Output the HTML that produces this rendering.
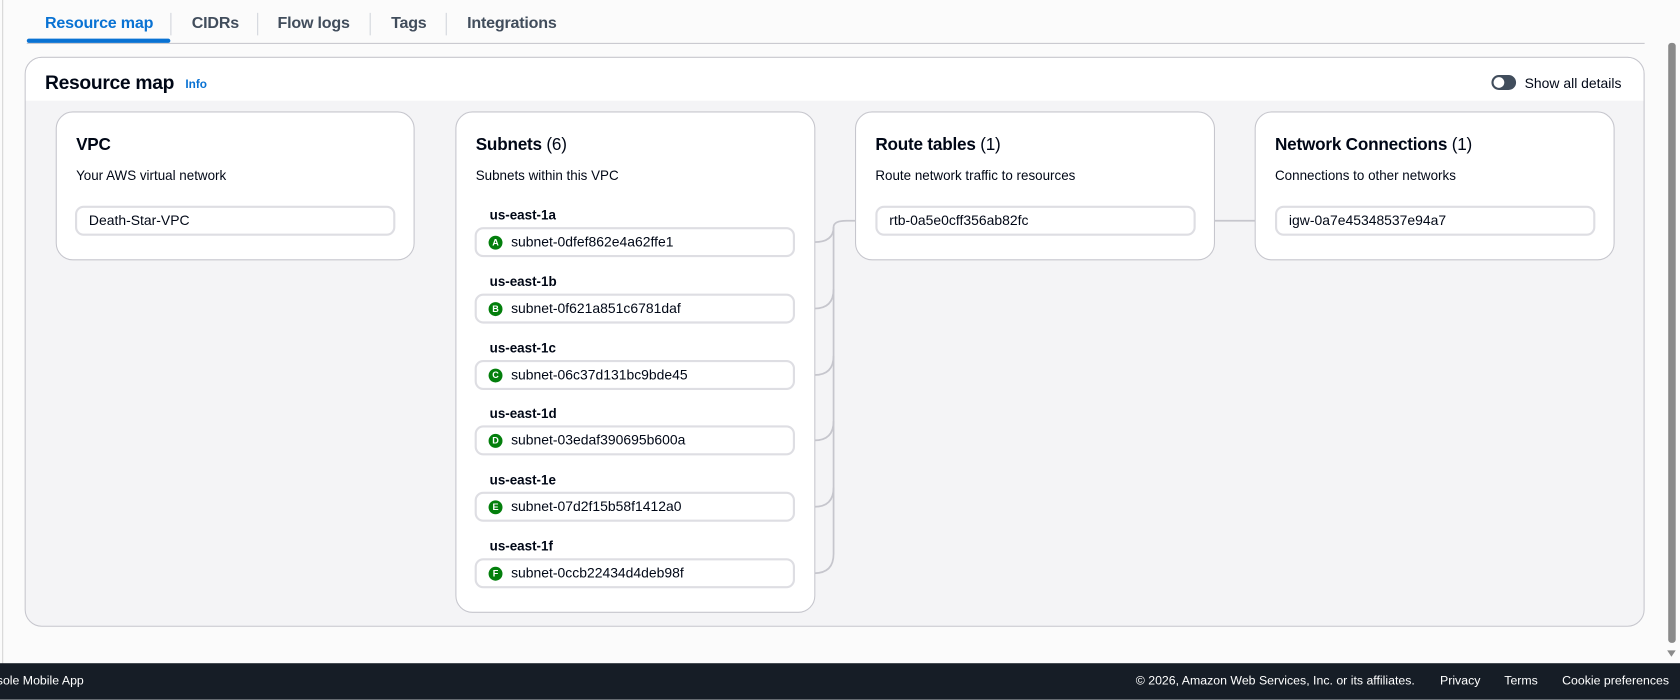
<!DOCTYPE html>
<html><head><meta charset="utf-8"><style>
*{box-sizing:border-box;margin:0;padding:0}
html,body{width:1680px;height:699px;overflow:hidden;background:#fbfbfb;font-family:"Liberation Sans",sans-serif;color:#000716}
#s{position:absolute;left:0;top:0;width:1568px;height:653px;transform:scale(1.07143);transform-origin:0 0}
.a{position:absolute}
.tab{position:absolute;top:13px;font-size:15px;font-weight:bold;color:#414d5c;letter-spacing:-0.2px}
.sep{position:absolute;top:12px;width:1px;height:21px;background:#d1d5db}
.card{position:absolute;background:#fff;border:1px solid #c6c6cd;border-radius:16px}
.ct{position:absolute;left:18px;top:22px;font-size:16px;font-weight:bold;letter-spacing:-0.2px}
.ct span{font-weight:normal}
.cs{position:absolute;left:18px;top:52px;font-size:12.5px;color:#000716}
.box{position:absolute;background:#fff;border:2px solid #dedee3;border-radius:8px;font-size:13px;padding-left:11px;line-height:24px;height:28px}
.lab{position:absolute;left:31px;font-size:12.5px;font-weight:bold}
.bd{display:inline-block;width:13px;height:13px;border-radius:50%;background:#037f0c;color:#fff;font-size:8.5px;font-weight:bold;text-align:center;line-height:13px;vertical-align:1px;margin-right:8px;margin-left:0}
.ft{position:absolute;top:630px;font-size:11.5px;color:#fff}
</style></head><body><div id="s">
<div class="a" style="left:2px;top:0;width:1px;height:620px;background:#d5d5d5"></div>
<div class="tab" style="left:42px;color:#0972d3">Resource map</div>
<div class="sep" style="left:159px"></div>
<div class="tab" style="left:179px">CIDRs</div>
<div class="sep" style="left:240px"></div>
<div class="tab" style="left:259px">Flow logs</div>
<div class="sep" style="left:345px"></div>
<div class="tab" style="left:365px">Tags</div>
<div class="sep" style="left:416px"></div>
<div class="tab" style="left:436px">Integrations</div>
<div class="a" style="left:25px;top:40px;width:1510px;height:1px;background:#c6c6cd"></div>
<div class="a" style="left:25px;top:36px;width:134px;height:4px;background:#0972d3;border-radius:2px"></div>

<div class="a" style="left:23px;top:53px;width:1512px;height:532px;border:1px solid #c6c6cd;border-radius:16px;background:#f4f4f6;overflow:hidden">
 <div class="a" style="left:0;top:0;width:100%;height:40px;background:#fff"></div>
 <div class="a" style="left:18px;top:13px;font-size:18px;font-weight:bold;letter-spacing:-0.3px">Resource map</div>
 <div class="a" style="left:149px;top:19px;font-size:11px;font-weight:bold;color:#0972d3">Info</div>
 <div class="a" style="left:1368px;top:16px;width:23px;height:14px;border-radius:7px;background:#414d5c"><div class="a" style="left:2px;top:2px;width:10px;height:10px;border-radius:50%;background:#fff"></div></div>
 <div class="a" style="left:1399px;top:16px;font-size:13px">Show all details</div>
</div>

<svg class="a" style="left:0;top:0" width="1568" height="653">
<g fill="none" stroke="#c6c6cd" stroke-width="1.6">
<path d="M741 226 H760 Q778 226 778 212 Q778 206 790 206 H817"/>
<path d="M741 288 H760 Q778 288 778 270 V212"/>
<path d="M741 350 H760 Q778 350 778 332 V270"/>
<path d="M741 411 H760 Q778 411 778 393 V332"/>
<path d="M741 473 H760 Q778 473 778 455 V393"/>
<path d="M741 535 H760 Q778 535 778 517 V455"/>
<path d="M1114 206 H1190"/>
</g></svg>

<div class="card" style="left:52px;top:104px;width:335px;height:139px">
 <div class="ct">VPC</div><div class="cs">Your AWS virtual network</div>
 <div class="box" style="left:17px;top:87px;width:299px">Death-Star-VPC</div>
</div>
<div class="card" style="left:425px;top:104px;width:336px;height:468px">
 <div class="ct">Subnets <span>(6)</span></div><div class="cs">Subnets within this VPC</div>
 <div class="lab" style="top:89px">us-east-1a</div>
 <div class="box" style="left:17px;top:107px;width:299px"><span class="bd">A</span>subnet-0dfef862e4a62ffe1</div>
 <div class="lab" style="top:151px">us-east-1b</div>
 <div class="box" style="left:17px;top:169px;width:299px"><span class="bd">B</span>subnet-0f621a851c6781daf</div>
 <div class="lab" style="top:213px">us-east-1c</div>
 <div class="box" style="left:17px;top:231px;width:299px"><span class="bd">C</span>subnet-06c37d131bc9bde45</div>
 <div class="lab" style="top:274px">us-east-1d</div>
 <div class="box" style="left:17px;top:292px;width:299px"><span class="bd">D</span>subnet-03edaf390695b600a</div>
 <div class="lab" style="top:336px">us-east-1e</div>
 <div class="box" style="left:17px;top:354px;width:299px"><span class="bd">E</span>subnet-07d2f15b58f1412a0</div>
 <div class="lab" style="top:398px">us-east-1f</div>
 <div class="box" style="left:17px;top:416px;width:299px"><span class="bd">F</span>subnet-0ccb22434d4deb98f</div>
</div>
<div class="card" style="left:798px;top:104px;width:336px;height:139px">
 <div class="ct">Route tables <span>(1)</span></div><div class="cs">Route network traffic to resources</div>
 <div class="box" style="left:18px;top:87px;width:299px">rtb-0a5e0cff356ab82fc</div>
</div>
<div class="card" style="left:1171px;top:104px;width:336px;height:139px">
 <div class="ct">Network Connections <span>(1)</span></div><div class="cs">Connections to other networks</div>
 <div class="box" style="left:18px;top:87px;width:299px">igw-0a7e45348537e94a7</div>
</div>

<div class="a" style="left:1553px;top:0;width:15px;height:620px;background:#fbfbfb"></div>
<div class="a" style="left:1557px;top:40px;width:7px;height:560px;background:#8a8a8a;border-radius:3px"></div>
<div class="a" style="left:1556px;top:607px;width:0;height:0;border-left:4.5px solid transparent;border-right:4.5px solid transparent;border-top:6px solid #8a8a8a"></div>

<div class="a" style="left:0;top:619px;width:1568px;height:34px;background:#161d26"></div>
<div class="ft" style="left:-3px">sole Mobile App</div>
<div class="ft" style="left:1060px">© 2026, Amazon Web Services, Inc. or its affiliates.</div>
<div class="ft" style="left:1344px">Privacy</div>
<div class="ft" style="left:1404px">Terms</div>
<div class="ft" style="left:1458px">Cookie preferences</div>
</div></body></html>
